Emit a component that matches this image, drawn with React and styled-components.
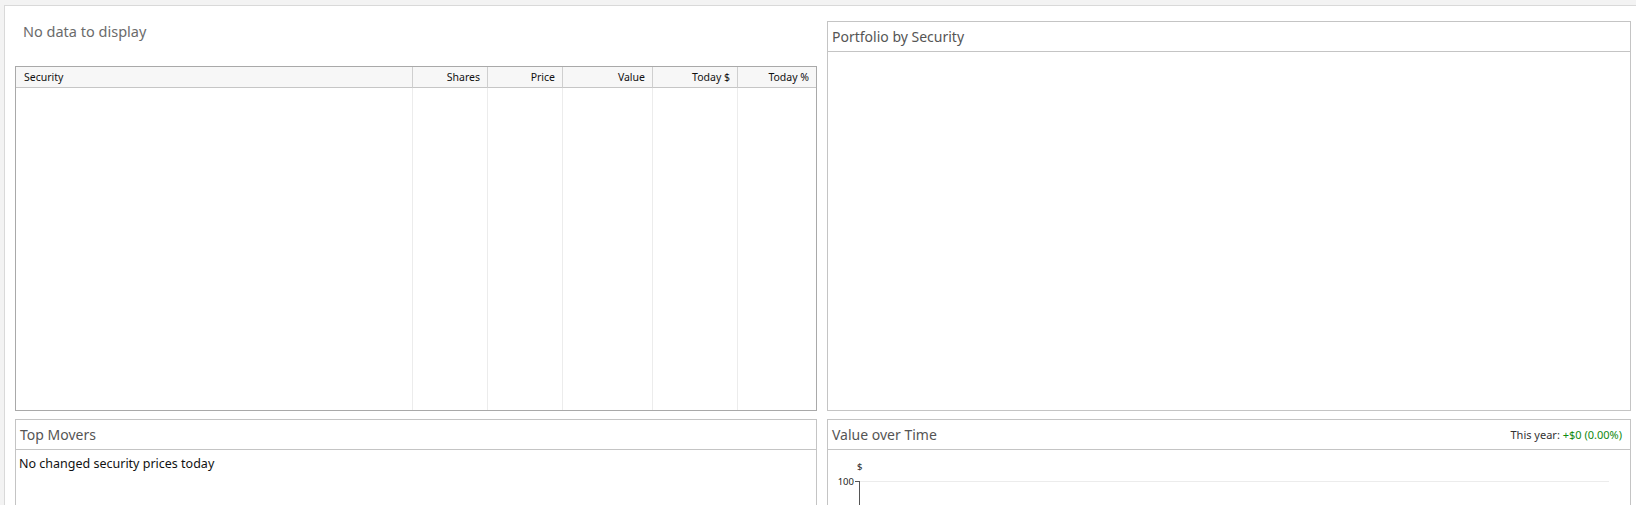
import styled, { createGlobalStyle } from "styled-components"

const GlobalStyle = createGlobalStyle`
  html, body {
    margin: 0;
    padding: 0;
    background: #f3f3f3;
    font-family: "Noto Sans", "Open Sans", sans-serif;
    overflow: hidden;
  }
`

const Page = styled.div`
  padding: 5px 0 0 4px;
  height: 505px;
  box-sizing: border-box;
  overflow: hidden;
`

const Sheet = styled.div`
  background: #fff;
  border-top: 1px solid #d9d9d9;
  border-left: 1px solid #d9d9d9;
  height: 100%;
  box-sizing: border-box;
  padding: 15px 0 0 10px;
  display: grid;
  grid-template-columns: 802px 804px;
  grid-template-rows: 390px 200px;
  column-gap: 10px;
  row-gap: 8px;
`

const LeftColumn = styled.div`
  display: flex;
  flex-direction: column;
  margin-top: -15px;
`

const EmptyNote = styled.div`
  height: 60px;
  padding: 15px 0 0 8px;
  box-sizing: border-box;
  font-size: 14.5px;
  color: #6b6b6b;
`

const Grid = styled.div`
  flex: 1;
  border: 1px solid #a9a9a9;
  display: grid;
  grid-template-columns: 397px 75px 75px 90px 85px 1fr;
  grid-template-rows: 21px 1fr;
`

const HeadCell = styled.div`
  background: #f7f7f7;
  border-bottom: 1px solid #c6c6c6;
  border-right: ${p => (p.$last ? "none" : "1px solid #cfcfcf")};
  font-size: 10.5px;
  line-height: 20px;
  color: #111;
  text-align: ${p => p.$align || "right"};
  padding: 0 7px 0 8px;
`

const BodyCell = styled.div`
  border-right: ${p => (p.$last ? "none" : "1px solid #ececec")};
`

const Panel = styled.div`
  border: 1px solid #c4c4c4;
  display: flex;
  flex-direction: column;
  background: #fff;
`

const PanelHeader = styled.div`
  height: 29px;
  border-bottom: 1px solid #c4c4c4;
  display: flex;
  align-items: center;
  justify-content: space-between;
  padding: 0 8px 0 4px;
  flex-shrink: 0;
`

const PanelTitle = styled.span`
  font-size: 14px;
  color: #555;
`

const YearNote = styled.span`
  font-size: 11px;
  color: #333;
`

const Gain = styled.span`
  color: #118a11;
`

const PanelBody = styled.div`
  flex: 1;
  padding: ${p => p.$pad || "0"};
  font-size: 12.5px;
  color: #111;
`

const columns = [
  { name: "Security", align: "left" },
  { name: "Shares" },
  { name: "Price" },
  { name: "Value" },
  { name: "Today $" },
  { name: "Today %" },
]

const Chart = () => (
  <svg width="800" height="80" style={{ display: "block" }}>
    <text x="29" y="20" fontSize="9.5" fill="#222" fontFamily="Noto Sans, sans-serif">$</text>
    <text x="26" y="35" fontSize="9.5" fill="#222" textAnchor="end" fontFamily="Noto Sans, sans-serif">100</text>
    <line x1="31.5" y1="31.5" x2="781" y2="31.5" stroke="#ececec" />
    <line x1="27" y1="31.5" x2="31.5" y2="31.5" stroke="#555" />
    <line x1="31.5" y1="31" x2="31.5" y2="80" stroke="#555" />
  </svg>
)

export default function App() {
  return (
    <>
      <GlobalStyle />
      <Page>
        <Sheet>
          <LeftColumn>
            <EmptyNote>No data to display</EmptyNote>
            <Grid>
              {columns.map((c, i) => (
                <HeadCell key={c.name} $align={c.align} $last={i === columns.length - 1}>
                  {c.name}
                </HeadCell>
              ))}
              {columns.map((c, i) => (
                <BodyCell key={c.name} $last={i === columns.length - 1} />
              ))}
            </Grid>
          </LeftColumn>

          <Panel>
            <PanelHeader>
              <PanelTitle>Portfolio by Security</PanelTitle>
            </PanelHeader>
            <PanelBody />
          </Panel>

          <Panel>
            <PanelHeader>
              <PanelTitle>Top Movers</PanelTitle>
            </PanelHeader>
            <PanelBody $pad="5px 3px">No changed security prices today</PanelBody>
          </Panel>

          <Panel>
            <PanelHeader>
              <PanelTitle>Value over Time</PanelTitle>
              <YearNote>
                This year: <Gain>+$0 (0.00%)</Gain>
              </YearNote>
            </PanelHeader>
            <PanelBody $pad="0">
              <Chart />
            </PanelBody>
          </Panel>
        </Sheet>
      </Page>
    </>
  )
}
